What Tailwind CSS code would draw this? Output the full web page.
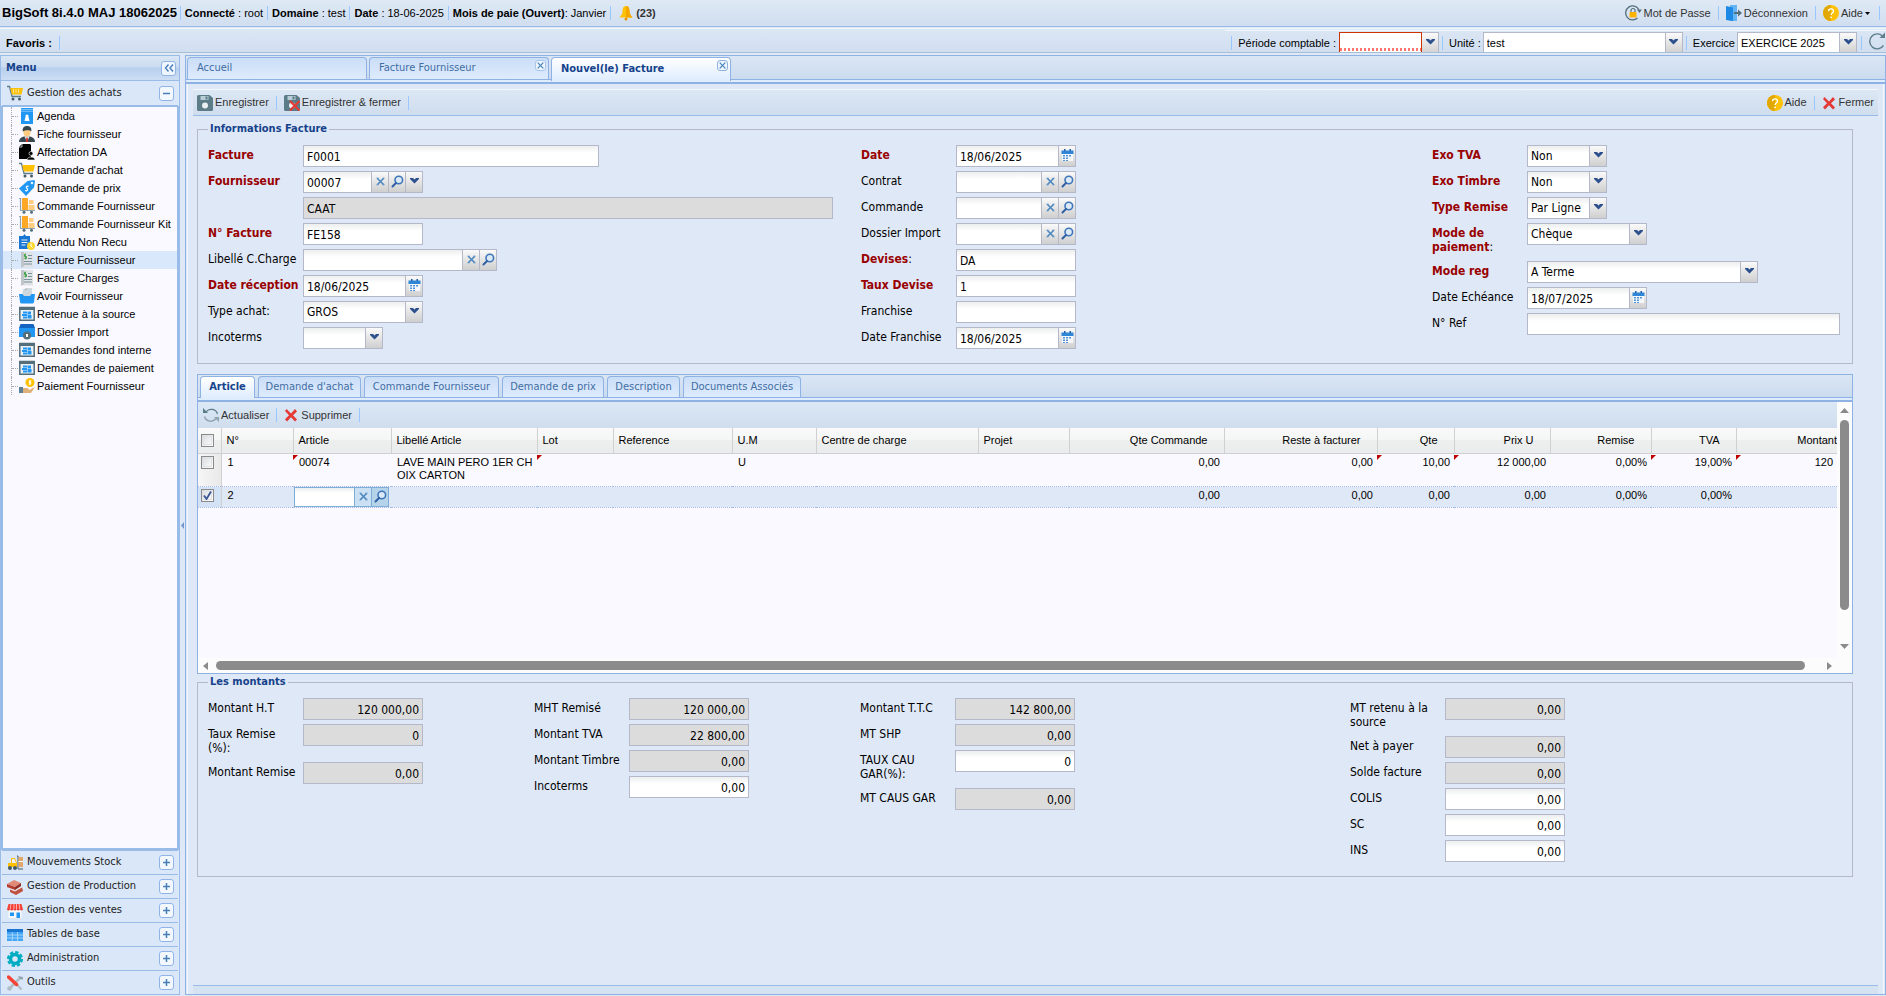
<!DOCTYPE html>
<html lang="fr">
<head>
<meta charset="utf-8">
<title>BigSoft - Nouvel(le) Facture</title>
<script src="https://cdn.jsdelivr.net/npm/@tailwindcss/browser@4"></script>
</head>
<body class="h-screen flex flex-col overflow-hidden bg-[#dfe8f6] font-['Liberation_Sans',sans-serif] text-[11px] text-black">

<!-- icon sprite -->
<svg class="hidden">
    <symbol id="i-lock" viewBox="0 0 18 16"><path d="M12.500 13A7 7 0 1 1 13.800 4.500" fill="none" stroke="#546e7a" stroke-width="1.300" /><path d="M11.800 4.500h5l-2.300 3.500z" fill="#546e7a" /><path d="M6 8V5.500a2 2 0 0 1 4 0V8" fill="none" stroke="#546e7a" stroke-width="1.200" /><rect x="4.500" y="7" width="7" height="5.500" rx="1" fill="#ffb300" /></symbol>
    <symbol id="i-exit" viewBox="0 0 16 16"><path d="M4 0h7v16H4z" fill="#64b5f6" /><path d="M0 1l7 1.500V16l-7-1z" fill="#1e88e5" /><path d="M8 7h4V4.500L16 8l-4 3.500V9H8z" fill="#546e7a" /></symbol>
    <symbol id="i-help" viewBox="0 0 16 16"><circle cx="8" cy="8" r="8" fill="#ffc107" /><path d="M8 0a8 8 0 0 0 0 16z" fill="#e0a800" /><path d="M5.500 6.200C5.500 3 10.500 3 10.500 6.200 10.500 8 8 8 8 10" fill="none" stroke="#fff" stroke-width="1.300" /><circle cx="8" cy="12.300" r=".9" fill="#fff" /></symbol>
    <symbol id="i-bell" viewBox="0 0 14 16"><path d="M7 1C4 1 3.500 4 3.500 6.500S2 10.500.500 12.500h13C12 10.500 10.500 9 10.500 6.500S10 1 7 1z" fill="#ffc107" /><path d="M7 1c3 0 3.500 3 3.500 5.500s1.500 4 3 6H7z" fill="#f5a700" /><circle cx="7" cy="14" r="1.500" fill="#e69500" /></symbol>
    <symbol id="i-refresh" viewBox="0 0 18 18"><path d="M15.500 13.500A7.500 7.500 0 1 1 14.500 4" fill="none" stroke="#5f7f8c" stroke-width="1.400" /><path d="M11.500 6H17V.5z" fill="#5f7f8c" /></symbol>
    <symbol id="i-sync" viewBox="0 0 16 16"><path d="M3 5a6.500 6.500 0 0 1 11.500 2" fill="none" stroke="#5b7d85" stroke-width="1.200" /><path d="M0 1l5 5H0z" fill="#5b7d85" /><path d="M13 11.500a6.500 6.500 0 0 1-11.500-2" fill="none" stroke="#90a4ae" stroke-width="1.400" /><path d="M16 15l-5-5h5z" fill="#90a4ae" /></symbol>
    <symbol id="i-save" viewBox="0 0 16 16"><path d="M1.500 0h11L16 3v11.500a1.500 1.500 0 0 1-1.500 1.500h-13A1.500 1.500 0 0 1 0 14.500v-13A1.500 1.500 0 0 1 1.500 0z" fill="#5c7c88" /><path d="M3.500 1h8v4h-8z" fill="#b8cdd6" /><path d="M8.500 1.500h2v3h-2z" fill="#5c7c88" /><circle cx="8" cy="10.500" r="3" fill="#eceff1" /></symbol>
    <symbol id="i-saveclose" viewBox="0 0 16 16"><use href="#i-save" /><path d="M6 6l9.500 9.500M15.500 6L6 15.500" stroke="#e53935" stroke-width="2.200" /></symbol>
    <symbol id="i-x" viewBox="0 0 14 14"><path d="M2.500 1L7 5.500 11 1l2 2.500L9 7.200l4 4.300-2 2-4-4.200L3 13.500 1 11.300 5 7.200 1 3z" fill="#e53935" /></symbol>
    <symbol id="i-chev" viewBox="0 0 9 6"><path d="M0 0h3l1.500 1.500L6 0h3v1L4.500 5.500 0 1z" fill="#2c4f8e" /></symbol>
    <symbol id="i-clear" viewBox="0 0 9 9"><path d="M1.500 1.500l6 6M7.500 1.500l-6 6" stroke="#4a86bf" stroke-width="1.600" /><path d="M.5 1.200h2M6.500 1.200h2M.5 7.800h2M6.500 7.800h2" stroke="#4a86bf" /></symbol>
    <symbol id="i-find" viewBox="0 0 13 13"><circle cx="7.800" cy="5" r="3.800" fill="#dceaf8" stroke="#3f76b9" stroke-width="1.600" /><path d="M5 8L1.500 11.500" stroke="#2f5fa5" stroke-width="2" stroke-linecap="round" /></symbol>
    <symbol id="i-cal" viewBox="0 0 13 13"><path d="M1 4h11v8H1z" fill="#f4f8fc" /><path d="M.5 1.500h12V5H.5z" fill="#2f86d6" /><path d="M3 0h1.500v2H3zM8.500 0H10v2H8.500z" fill="#1d5fa8" /><path d="M2 6h2v1.500H2zM5 6h2v1.500H5zM8 6h2v1.500H8zM2 8.500h2V10H2zM5 8.500h2V10H5zM2 11h2v1H2zM5 11h2v1H5z" fill="#4f93d8" /></symbol>
    <symbol id="i-cart" viewBox="0 0 16 16"><path d="M0 1.500h2.500l2.500 10h9" fill="none" stroke="#607d8b" stroke-width="1.300" /><path d="M3.200 3H16l-1.500 6.500H4.800z" fill="#ffc107" /><circle cx="6" cy="14" r="1.500" fill="#455a64" /><circle cx="12.500" cy="14" r="1.500" fill="#455a64" /></symbol>
    <symbol id="i-cartbig" viewBox="0 0 16 16"><use href="#i-cart" /><path d="M6.500 4v4M9 4v4M11.500 4v4" stroke="#fff3c4" stroke-width=".7" /></symbol>
    <symbol id="i-agenda" viewBox="0 0 16 16"><path d="M2 0h12v16H2z" fill="#2196f3" /><path d="M2 1.500h12M2 3.300h12" stroke="#90caf9" stroke-width=".8" /><circle cx="8" cy="8" r="1.600" fill="#fff" /><path d="M6.500 9h3l1 4h-5z" fill="#fff" /></symbol>
    <symbol id="i-man" viewBox="0 0 16 16"><path d="M0 16c0-4 3-5 5-5.500h6c2 .5 5 1.500 5 5.500z" fill="#37474f" /><path d="M5.500 10.500L8 16l2.500-5.500z" fill="#eceff1" /><path d="M7.300 11.500h1.400l.5 4.500H6.800z" fill="#d32f2f" /><ellipse cx="8" cy="6" rx="3.600" ry="4.500" fill="#ffcc80" /><path d="M3.800 5.500C3 1 6 0 8 0s5.200 1 4.200 5.500C11 3.500 6 4 3.800 5.500z" fill="#37474f" /></symbol>
    <symbol id="i-doc" viewBox="0 0 16 16"><path d="M3 0h8l1 1v14H0V3z" fill="#000" /><path d="M0 3h3V0" fill="none" stroke="#fff" stroke-width=".7" /><circle cx="12" cy="9.500" r="2" stroke="#fff" stroke-width=".6" /><path d="M8 16c0-4 8-4 8 0z" stroke="#fff" stroke-width=".6" /></symbol>
    <symbol id="i-tag" viewBox="0 0 16 16"><path d="M0 8.500L8.500 1 15 0l1 1-1 6.500L7 16z" fill="#2196f3" /><circle cx="13" cy="3" r="1.300" fill="#e3f2fd" /><path d="M9.500 6.500c-2-1-3 1-1.500 2s0 3-2 2" fill="none" stroke="#fff" stroke-width="1.200" /></symbol>
    <symbol id="i-boxes" viewBox="0 0 16 16"><path d="M0 .5h1.500v12H16" fill="none" stroke="#90a4ae" stroke-width="1.200" /><path d="M3 0h6v12H3z" fill="#ffa726" /><path d="M10 2h4.500v4H10zM9.500 7h6v5h-6z" fill="#ffcc80" /><circle cx="5" cy="14.300" r="1.500" fill="#546e7a" /><circle cx="12.500" cy="14.300" r="1.500" fill="#546e7a" /></symbol>
    <symbol id="i-clip" viewBox="0 0 16 16"><path d="M0 2h4l1.500-2L7 2h4v13H0z" fill="#1976d2" /><path d="M2.500 6h6M2.500 8.500h6M2.500 11h4" stroke="#e3f2fd" stroke-width="1.200" /><circle cx="12" cy="12" r="4" fill="#fdd835" /><path d="M12 9.500V12l1.500 1.500" fill="none" stroke="#fff" /></symbol>
    <symbol id="i-bill" viewBox="0 0 16 16"><path d="M2 0h12v16l-2-1-2 1-2-1-2 1-2-1-2 1z" fill="#e0e3e5" /><path d="M2 0h3v15l-1-.5L2 16z" fill="#bfc6ca" /><path d="M7 2.500H5.500v2h2v2H5.500M6.300 1.500v6" fill="none" stroke="#43a047" /><path d="M9 3.500h4M9 6.500h4M5 9.500h8M5 12h8" stroke="#78909c" /></symbol>
    <symbol id="i-basket" viewBox="0 0 16 16"><path d="M4 2l4-2h5v8H3z" fill="#cfd8dc" /><path d="M4 2h4V0z" fill="#b0bec5" /><path d="M0 6h3.500l1.500 2h6l1.500-2H16l-1 8q0 1.500-2 1.500H3q-2 0-2-1.500z" fill="#2196f3" /></symbol>
    <symbol id="i-window" viewBox="0 0 16 16"><path d="M.8 1.500h14.400v12.800H.8z" fill="#e8f0f5" stroke="#546e7a" stroke-width="1.500" /><path d="M0 1h16v3H0z" fill="#546e7a" /><path d="M4 5.500h4v2H4zM8.500 5.500H12v3H8.500zM3 8h5v2H3zM8.500 9h4v3.500h-4zM4 10.500h4v2H4z" fill="#2196f3" /></symbol>
    <symbol id="i-folder" viewBox="0 0 16 16"><path d="M1.500 0h13L16 4v9H0V4z" fill="#1565c0" /><path d="M0 4h16v8.500q0 .5-1 .5H1q-1 0-1-.5z" fill="#2196f3" /><circle cx="8" cy="11.500" r="4" fill="#546e7a" /><path d="M7 10h2v3H7z" fill="#fff" /></symbol>
    <symbol id="i-pay" viewBox="0 0 16 16"><circle cx="11" cy="4.500" r="4.500" fill="#ffc107" /><path d="M12.300 3h-2v1.500h1.500V6h-2M11 2v5" fill="none" stroke="#fff" stroke-width=".9" /><path d="M4 10h5l1 2 6-3-4 6H3z" fill="#e0b07a" /><path d="M0 9h4v6H0z" fill="#5b7f95" /></symbol>
    <symbol id="i-lift" viewBox="0 0 16 16"><path d="M10 1h1v13h5" fill="none" stroke="#455a64" /><path d="M11.500 2H16v10h-4.500z" fill="#e2a76a" /><path d="M11.500 6.500H16" stroke="#fff" /><path d="M1 8h3V3h4l2 5v4H1z" fill="#ffc107" /><path d="M5 4h2.500L9 8H5z" fill="#eceff1" /><circle cx="3" cy="13" r="2" fill="#455a64" /><circle cx="8" cy="13" r="2" fill="#455a64" /></symbol>
    <symbol id="i-bricks" viewBox="0 0 16 16"><path d="M0 5l7-4 7 3-6 4z" fill="#e08a78" /><path d="M0 5l8 3v3L0 8z" fill="#b53c2f" /><path d="M8 8l6-4v3l-6 4z" fill="#8f2c22" /><path d="M3 10l5 2 7-4 1 4-7 4-6-3z" fill="#c0503f" /><path d="M3 10l5 2 7-4" fill="none" stroke="#f0e0dc" /></symbol>
    <symbol id="i-shop" viewBox="0 0 16 16"><path d="M1.500 7h13v8h-13z" fill="#f5f8fa" /><path d="M1.500 1h13L16 6.500H0z" fill="#f44336" /><path d="M4 1L3 7M7 1v6M9.500 1v6M12 1l1 6" stroke="#ffcdd2" stroke-width=".8" /><path d="M0 6h16q-1.500 3-3.200 0-1.600 3-3.200 0-1.600 3-3.200 0-1.600 3-3.200 0Q1.500 9 0 6z" fill="#e53935" /><path d="M3 9.500h4V13H3zM9.500 9.500H13V15H9.500z" fill="#2196f3" /></symbol>
    <symbol id="i-table" viewBox="0 0 16 16"><path d="M0 2h16v12H0z" fill="#42a5f5" /><path d="M0 2h16v3H0z" fill="#1976d2" /><path d="M0 8h16M0 11h16M5.300 5v9M10.600 5v9" stroke="#bbdefb" stroke-width=".8" /></symbol>
    <symbol id="i-gear" viewBox="0 0 16 16"><circle cx="8" cy="8" r="4.500" fill="none" stroke="#00acc1" stroke-width="3.500" /><circle cx="8" cy="8" r="7" fill="none" stroke="#00acc1" stroke-width="2" stroke-dasharray="3.400 2.100" /></symbol>
    <symbol id="i-tools" viewBox="0 0 16 16"><path d="M13.500 2.500L3 13" stroke="#b0bec5" stroke-width="2.500" /><path d="M11 1l1.500 2.500L15.500 5 16 2z" fill="#90a4ae" /><circle cx="2.500" cy="13.500" r="2.300" fill="#b0bec5" /><path d="M9 8.500l5.500 6" stroke="#b0bec5" stroke-width="2" /><path d="M1.500 2l8 7.500" stroke="#f44336" stroke-width="3.500" stroke-linecap="round" /></symbol>
    <symbol id="i-collapse" viewBox="0 0 10 8"><path d="M4.500.5L1.500 4l3 3.500M9 .5L6 4l3 3.500" fill="none" stroke="#4a7ebb" stroke-width="1.400" /></symbol>
    <symbol id="i-minus" viewBox="0 0 7 7"><path d="M0 3.500h7" stroke="#4a7ebb" stroke-width="1.500" /></symbol>
    <symbol id="i-plus" viewBox="0 0 7 7"><path d="M0 3.500h7M3.500 0v7" stroke="#4a7ebb" stroke-width="1.500" /></symbol>
</svg>

<!-- top bar -->
<header class="flex items-center h-[27px] shrink-0 pl-[2px] pr-[6px] border-b border-[#99bbe8] bg-linear-to-b from-[#dfe9f5] to-[#d0def0]">
    <b class="text-[13px] mr-[3px]">BigSoft 8i.4.0 MAJ 18062025</b>
    <span class="w-px h-[14px] mr-1 bg-[#98c8ff]"></span>
    <span class="mr-1"><b>Connecté</b> : root</span>
    <span class="w-px h-[14px] mr-1 bg-[#98c8ff]"></span>
    <span class="mr-1"><b>Domaine</b> : test</span>
    <span class="w-px h-[14px] mr-1 bg-[#98c8ff]"></span>
    <span class="mr-1"><b>Date</b> : 18-06-2025</span>
    <span class="w-px h-[14px] mr-1 bg-[#98c8ff]"></span>
    <span class="mr-1"><b>Mois de paie (Ouvert)</b>: Janvier</span>
    <span class="w-px h-[14px] mr-2 bg-[#98c8ff]"></span>
    <button class="flex items-center gap-[3px] font-bold text-[#333]"><svg class="w-[14px] h-4"><use href="#i-bell" /></svg>(23)</button>
    <div class="ml-auto flex items-center gap-[7px] text-[#333]">
        <button class="flex items-center"><svg class="w-[18px] h-4"><use href="#i-lock" /></svg>Mot de Passe</button>
        <span class="w-px h-[14px] bg-[#98c8ff]"></span>
        <button class="flex items-center gap-[2px]"><svg class="w-4 h-4"><use href="#i-exit" /></svg>Déconnexion</button>
        <span class="w-px h-[14px] bg-[#98c8ff]"></span>
        <button class="flex items-center gap-[2px]"><svg class="w-4 h-4"><use href="#i-help" /></svg>Aide<svg class="w-[5px] h-[3px]" viewBox="0 0 5 3"><path d="M0 0h5L2.500 3z" fill="#000" /></svg></button>
        <span class="w-px h-[14px] ml-[2px] bg-[#98c8ff]"></span>
    </div>
</header>

<!-- favourites / period -->
<div class="flex h-[25px] shrink-0 mt-px pl-[6px] border-t border-b border-t-[#f2f7fc] border-b-[#a9bfd3] bg-linear-to-b from-[#dce7f4] to-[#d0def0] overflow-hidden">
    <b class="mt-[6px]">Favoris :</b>
    <span class="w-px h-[14px] mt-[7px] ml-[7px] bg-[#98c8ff]"></span>
    <div class="ml-auto flex h-[24px] pl-[6px] border-t border-[#f2f7fc] mt-px">
        <span class="w-px h-[14px] mt-[5px] bg-[#98c8ff]"></span>
        <label for="periode" class="mt-1 ml-[6px]">Période comptable :</label>
        <div class="relative ml-[3px] w-[100px] h-[22px] mt-px">
            <input id="periode" class="w-[83px] h-full px-[3px] bg-white border border-[#cc3300] outline-none">
            <div class="absolute left-px top-[16px] w-[81px] h-[3px] bg-[repeating-linear-gradient(90deg,#ff7870_0_2px,#fff_2px_4px)]"></div>
            <button aria-label="Ouvrir" class="absolute right-0 top-0 flex items-center justify-center w-[17px] h-full pb-1 bg-linear-to-b from-[#fafafa] to-[#d0d0d0] border-t border-r border-[#b5b8c8]"><svg class="w-[9px] h-[6px]"><use href="#i-chev" /></svg></button>
        </div>
        <span class="w-px h-[14px] mt-[5px] ml-[3px] bg-[#98c8ff]"></span>
        <label for="unite" class="mt-1 ml-[6px]">Unité :</label>
        <div class="relative ml-[2px] w-[200px] h-[22px] mt-px">
            <select id="unite" class="appearance-none w-full h-full px-[3px] bg-white border border-[#b5b8c8] outline-none"><option>test</option></select>
            <span class="pointer-events-none absolute right-px top-px flex items-center justify-center w-[17px] h-5 pb-[2px] bg-linear-to-b from-[#fafafa] to-[#d0d0d0] border-l border-[#b5b8c8]"><svg class="w-[9px] h-[6px]"><use href="#i-chev" /></svg></span>
        </div>
        <span class="w-px h-[14px] mt-[5px] ml-[3px] bg-[#98c8ff]"></span>
        <label for="exercice" class="mt-1 ml-[6px]">Exercice</label>
        <div class="relative ml-[2px] w-[120px] h-[22px] mt-px">
            <select id="exercice" class="appearance-none w-full h-full px-[3px] bg-white border border-[#b5b8c8] outline-none"><option>EXERCICE 2025</option></select>
            <span class="pointer-events-none absolute right-px top-px flex items-center justify-center w-[17px] h-5 pb-[2px] bg-linear-to-b from-[#fafafa] to-[#d0d0d0] border-l border-[#b5b8c8]"><svg class="w-[9px] h-[6px]"><use href="#i-chev" /></svg></span>
        </div>
        <span class="w-px h-[14px] mt-[5px] ml-[4px] bg-[#98c8ff]"></span>
        <button aria-label="Rafraîchir" class="ml-[6px] mt-px self-start"><svg class="w-[18px] h-[18px]"><use href="#i-refresh" /></svg></button>
    </div>
</div>

<div class="flex flex-1 min-h-0 pt-[2px] bg-[#dfe8f6]">
    <!-- menu -->
    <aside class="flex flex-col w-[180px] shrink-0 mb-px border border-[#99bbe8] font-['DejaVu_Sans_Condensed','Noto_Sans',sans-serif]">
        <div class="flex items-center h-[25px] shrink-0 pl-[5px] pr-[3px] border-b border-[#99bbe8] bg-[linear-gradient(#dae6f4,#cbdbef_45%,#b7cfee_50%,#cddef3)]">
            <b class="text-[#15428b]">Menu</b>
            <button aria-label="Réduire" class="ml-auto flex items-center justify-center w-[15px] h-[15px] rounded-[3px] border border-[#8fb5e6] bg-[#eef5fd]"><svg class="w-[10px] h-2"><use href="#i-collapse" /></svg></button>
        </div>
        <div class="flex items-center h-[25px] shrink-0 pl-[5px] pr-[4px] mx-px border-b border-[#99bbe8] bg-[#d9e7f8] text-[#222]">
            <svg class="w-4 h-4 mr-1"><use href="#i-cartbig" /></svg>Gestion des achats
            <button aria-label="Replier" class="ml-auto flex items-center justify-center w-[15px] h-[15px] rounded-[3px] border border-[#8fb5e6] bg-[#f3f8fe]"><svg class="w-[7px] h-[7px]"><use href="#i-minus" /></svg></button>
        </div>
        <ul id="tree" class="flex-1 min-h-0 border-2 border-t border-[#99bbe8] bg-[#f9f9ff] font-['Liberation_Sans',sans-serif]"></ul>
        <div id="accordion" class="px-px"></div>
    </aside>
    <div class="flex items-center w-[5px] shrink-0"><svg class="w-[5px] h-[7px]" viewBox="0 0 5 7"><path d="M4 0v7L1 3.500z" fill="#6f97cc" /></svg></div>

    <main class="flex flex-col flex-1 min-w-0 mb-px border border-[#8db2e3]">
        <div role="tablist" class="flex gap-[2px] h-[24px] shrink-0 pl-px pt-px border-b border-[#8db2e3] bg-linear-to-b from-[#dbe6f4] to-[#cbdbef] font-['DejaVu_Sans_Condensed','Noto_Sans',sans-serif]">
            <button role="tab" class="w-[180px] px-[9px] pb-px text-left rounded-t-[4px] border border-b-0 border-[#8db2e3] bg-linear-to-b from-[#cadef7] to-[#deebfd] text-[#416da3]">Accueil</button>
            <button role="tab" class="relative w-[180px] px-[9px] pb-px text-left rounded-t-[4px] border border-b-0 border-[#8db2e3] bg-linear-to-b from-[#cadef7] to-[#deebfd] text-[#416da3]">Facture Fournisseur
                <span class="absolute right-[2px] top-[2px] flex items-center justify-center w-[11px] h-[11px] rounded-[3px] border border-[#a9c5ea] bg-[#eef5fd]"><svg class="w-[7px] h-[7px]"><use href="#i-clear" /></svg></span></button>
            <button role="tab" aria-selected="true" class="relative w-[180px] h-[24px] px-[9px] pb-px text-left font-bold rounded-t-[4px] border border-b-0 border-[#8db2e3] bg-linear-to-b from-white to-[#deecfd] text-[#15428b]">Nouvel(le) Facture
                <span class="absolute right-[2px] top-[2px] flex items-center justify-center w-[11px] h-[11px] rounded-[3px] border border-[#8db2e3] bg-[#eef5fd]"><svg class="w-[7px] h-[7px]"><use href="#i-clear" /></svg></span></button>
        </div>
        <div class="h-1 shrink-0 bg-[#deecfd] border-b-2 border-[#8db2e3]"></div>

        <div class="flex flex-col flex-1 min-h-0 px-[5px] pt-[5px] mx-px border-x border-[#f2f7fc]">
            <div class="flex items-center gap-[7px] h-[27px] shrink-0 px-[4px] border-t border-b border-t-[#f2f7fc] border-b-[#99bbe8] bg-linear-to-b from-[#dce7f4] to-[#cfddee] text-[#333]">
                <button class="flex items-center gap-[2px]"><svg class="w-4 h-4"><use href="#i-save" /></svg>Enregistrer</button>
                <span class="w-px h-[14px] bg-[#98c8ff]"></span>
                <button class="flex items-center gap-[2px]"><svg class="w-4 h-4"><use href="#i-saveclose" /></svg>Enregistrer &amp; fermer</button>
                <span class="w-px h-[14px] bg-[#98c8ff]"></span>
                <button class="ml-auto flex items-center gap-[2px]"><svg class="w-4 h-4"><use href="#i-help" /></svg>Aide</button>
                <span class="w-px h-[14px] bg-[#98c8ff]"></span>
                <button class="flex items-center gap-[3px]"><svg class="w-[14px] h-[14px]"><use href="#i-x" /></svg>Fermer</button>
            </div>

            <div class="flex flex-col flex-1 pl-[4px] pr-[25px] pt-[5px] font-['DejaVu_Sans_Condensed','Noto_Sans',sans-serif]">
                <fieldset class="h-[243px] border border-[#b5b8c8] px-[10px]">
                    <legend class="px-[2px] leading-4 font-bold text-[#15428b]">Informations Facture</legend>
                    <div class="grid grid-cols-[653fr_571fr_410fr] pt-[8px] text-xs">
                        <div id="info1"></div>
                        <div id="info2"></div>
                        <div id="info3"></div>
                    </div>
                </fieldset>

                <!-- lines -->
                <section class="flex flex-col h-[300px] mt-[10px] border border-[#8db2e3]">
                    <div role="tablist" id="subtabs" class="flex gap-[3px] h-[23px] shrink-0 pl-[2px] pt-px border-b border-[#8db2e3] bg-linear-to-b from-[#dbe6f4] to-[#cbdbef]"></div>
                    <div class="h-1 shrink-0 bg-[#deecfd] border-b-2 border-[#8db2e3]"></div>
                    <div class="flex flex-1 min-h-0">
                        <div class="flex flex-col flex-1 min-w-0 font-['Liberation_Sans',sans-serif]">
                            <div class="flex items-center gap-[7px] h-[26px] shrink-0 px-[5px] bg-linear-to-b from-[#dce8f5] to-[#cfddee] text-[#333]">
                                <button class="flex items-center gap-[2px]"><svg class="w-4 h-4"><use href="#i-sync" /></svg>Actualiser</button>
                                <span class="w-px h-[14px] bg-[#98c8ff]"></span>
                                <button class="flex items-center gap-[3px]"><svg class="w-[14px] h-[14px]"><use href="#i-x" /></svg>Supprimer</button>
                                <span class="w-px h-[14px] bg-[#98c8ff]"></span>
                            </div>
                            <div class="flex-1 min-h-0 overflow-hidden bg-[#f9f9ff]">
                                <table class="table-fixed w-full border-collapse">
                                    <colgroup>
                                        <col class="w-[23px]"><col class="w-[72px]"><col class="w-[98px]"><col class="w-[146px]"><col class="w-[76px]"><col class="w-[119px]"><col class="w-[84px]"><col class="w-[162px]"><col class="w-[91px]"><col class="w-[155px]"><col class="w-[153px]"><col class="w-[77px]"><col class="w-[96px]"><col class="w-[101px]"><col class="w-[85px]"><col>
                                    </colgroup>
                                    <thead><tr id="ghead" class="h-[25px] bg-[linear-gradient(#f9f9f9,#f5f6f6_45%,#edeeee_50%,#ebeced)]"></tr></thead>
                                    <tbody id="gbody"></tbody>
                                </table>
                            </div>
                            <div class="flex items-center h-[15px] shrink-0 px-[5px] bg-[#fcfcfc]">
                                <svg class="w-[5px] h-2" viewBox="0 0 5 8"><path d="M5 0v8L0 4z" fill="#8b8b8b" /></svg>
                                <div class="flex-1 h-[9px] ml-2 mr-[22px] rounded-full bg-[#8b8b8b]"></div>
                                <svg class="w-[5px] h-2" viewBox="0 0 5 8"><path d="M0 0v8l5-4z" fill="#8b8b8b" /></svg>
                            </div>
                        </div>
                        <div class="flex flex-col items-center w-[15px] shrink-0 pt-[6px] pb-[24px] bg-[#fcfcfc]">
                            <svg class="w-[9px] h-[5px] shrink-0" viewBox="0 0 9 5"><path d="M0 5h9L4.500 0z" fill="#8b8b8b" /></svg>
                            <div class="w-[9px] h-[190px] mt-[7px] rounded-full bg-[#8b8b8b]"></div>
                            <svg class="w-[9px] h-[5px] mt-auto shrink-0" viewBox="0 0 9 5"><path d="M0 0h9L4.500 5z" fill="#8b8b8b" /></svg>
                        </div>
                    </div>
                </section>

                <fieldset class="h-[203px] border border-[#b5b8c8] px-[10px]">
                    <legend class="px-[2px] leading-4 font-bold text-[#15428b]">Les montants</legend>
                    <div class="grid grid-cols-[326fr_326fr_490fr_492fr] pt-[8px] text-xs">
                        <div id="mt1"></div>
                        <div id="mt2"></div>
                        <div id="mt3"></div>
                        <div id="mt4"></div>
                    </div>
                </fieldset>
                <div class="h-[9px] shrink-0 mt-auto ml-[-4px] mr-[-25px] border-t border-[#99bbe8] bg-[#d5e2f2]"></div>
            </div>
        </div>
    </main>
</div>

<script>
    const $ = id => document.getElementById(id);
    const icon = (name, cls) => `<svg class="${cls}"><use href="#i-${name}" /></svg>`;

    // left menu
    const tree = [
        ["agenda", "Agenda"], ["man", "Fiche fournisseur"], ["doc", "Affectation DA"], ["cart", "Demande d'achat"],
        ["tag", "Demande de prix"], ["boxes", "Commande Fournisseur"], ["boxes", "Commande Fournisseur Kit"],
        ["clip", "Attendu Non Recu"], ["bill", "Facture Fournisseur"], ["bill", "Facture Charges"],
        ["basket", "Avoir Fournisseur"], ["window", "Retenue à la source"], ["folder", "Dossier Import"],
        ["window", "Demandes fond interne"], ["window", "Demandes de paiement"], ["pay", "Paiement Fournisseur"],
    ];
    $("tree").innerHTML = tree.map(([i, t]) => `
        <li class="flex items-center h-[18px] pl-2 whitespace-nowrap ${t === "Facture Fournisseur" ? "bg-[#d9e8fb]" : ""}">
            <span class="w-[7px] h-full shrink-0 border-l border-dotted border-[#aaa] flex items-center"><span class="w-full border-t border-dotted border-[#aaa]"></span></span>
            ${icon(i, "w-4 h-4 shrink-0 ml-px")}<a href="#" class="ml-[2px]">${t}</a>
        </li>`).join("");

    const groups = [["lift", "Mouvements Stock"], ["bricks", "Gestion de Production"], ["shop", "Gestion des ventes"],
        ["table", "Tables de base"], ["gear", "Administration"], ["tools", "Outils"]];
    $("accordion").innerHTML = groups.map(([i, t]) => `
        <div class="flex items-center h-6 pl-[5px] pr-[4px] border-t border-[#99bbe8] bg-[#d9e7f8] text-[#222]">
            ${icon(i, "w-4 h-4 mr-1")}${t}
            <button aria-label="${t}" class="ml-auto flex items-center justify-center w-[15px] h-[15px] rounded-[3px] border border-[#8fb5e6] bg-[#f3f8fe]">${icon("plus", "w-[7px] h-[7px]")}</button>
        </div>`).join("");

    // form fields
    let n = 0;
    const trigIcons = {
        clear: icon("clear", "w-[9px] h-[9px]"),
        find: icon("find", "w-[13px] h-[13px]"),
        cal: icon("cal", "w-[13px] h-[13px]"),
        chev: icon("chev", "w-[9px] h-[6px]"),
    };
    const trigger = k => `<button aria-label="${k}" class="flex items-center justify-center w-[17px] shrink-0 pb-[2px] border-l border-[#b5b8c8] bg-linear-to-b from-[#fafafa] to-[#cfcfcf]">${trigIcons[k]}</button>`;
    function field(f) {
        const id = "f" + (++n);
        const bg = f.off ? "bg-[#dcdcdc]" : "bg-[linear-gradient(#eceeef,#fff_7px)]";
        const w = f.w || "w-[120px]";
        const star = f.req ? "font-bold text-[#990000]" : "";
        const label = `<label for="${id}" class="w-[92px] mr-[3px] shrink-0 py-[3px] leading-[14px]"><span class="${star}">${f.l || ""}</span>${f.colon || ""}</label>`;
        const control = f.sel
            ? `<select id="${id}" class="appearance-none flex-1 min-w-0 px-[3px] outline-none"><option>${f.v || ""}</option></select><span class="pointer-events-none absolute right-0 inset-y-0 flex items-center justify-center w-[17px] pb-[2px] border-l border-[#b5b8c8] bg-linear-to-b from-[#fafafa] to-[#cfcfcf]">${trigIcons.chev}</span>`
            : `<input id="${id}" value="${f.v || ""}" ${f.off ? "readonly" : ""} class="flex-1 min-w-0 px-[3px] pt-px outline-none ${f.num ? "text-right" : ""}">${(f.t || []).map(trigger).join("")}`;
        return `<div class="flex items-start mb-1">${label}<div class="relative flex h-[22px] ${w} border border-[#b5b8c8] ${bg}">${control}</div></div>`;
    }
    const fill = (id, list) => $(id).innerHTML = list.map(field).join("");

    fill("info1", [
        { l: "Facture", req: 1, v: "F0001", w: "w-[296px]" },
        { l: "Fournisseur", req: 1, v: "00007", t: ["clear", "find", "chev"] },
        { v: "CAAT", off: 1, w: "w-[530px]" },
        { l: "N° Facture", req: 1, v: "FE158" },
        { l: "Libellé C.Charge", w: "w-[194px]", t: ["clear", "find"] },
        { l: "Date réception", req: 1, v: "18/06/2025", t: ["cal"] },
        { l: "Type achat:", v: "GROS", sel: 1 },
        { l: "Incoterms", sel: 1, w: "w-[80px]" },
    ]);
    fill("info2", [
        { l: "Date", req: 1, v: "18/06/2025", t: ["cal"] },
        { l: "Contrat", t: ["clear", "find"] },
        { l: "Commande", t: ["clear", "find"] },
        { l: "Dossier Import", t: ["clear", "find"] },
        { l: "Devises", colon: ":", req: 1, v: "DA" },
        { l: "Taux Devise", req: 1, v: "1" },
        { l: "Franchise" },
        { l: "Date Franchise", v: "18/06/2025", t: ["cal"] },
    ]);
    fill("info3", [
        { l: "Exo TVA", req: 1, v: "Non", sel: 1, w: "w-[80px]" },
        { l: "Exo Timbre", req: 1, v: "Non", sel: 1, w: "w-[80px]" },
        { l: "Type Remise", req: 1, v: "Par Ligne", sel: 1, w: "w-[80px]" },
        { l: "Mode de paiement", colon: ":", req: 1, v: "Chèque", sel: 1 },
        { l: "Mode reg", req: 1, v: "A Terme", sel: 1, w: "w-[231px]" },
        { l: "Date Echéance", v: "18/07/2025", t: ["cal"] },
        { l: "N° Ref", w: "w-[313px]" },
    ]);
    fill("mt1", [
        { l: "Montant H.T", v: "120 000,00", off: 1, num: 1 },
        { l: "Taux Remise (%):", v: "0", off: 1, num: 1 },
        { l: "Montant Remise", v: "0,00", off: 1, num: 1 },
    ]);
    fill("mt2", [
        { l: "MHT Remisé", v: "120 000,00", off: 1, num: 1 },
        { l: "Montant TVA", v: "22 800,00", off: 1, num: 1 },
        { l: "Montant Timbre", v: "0,00", off: 1, num: 1 },
        { l: "Incoterms", v: "0,00", num: 1 },
    ]);
    fill("mt3", [
        { l: "Montant T.T.C", v: "142 800,00", off: 1, num: 1 },
        { l: "MT SHP", v: "0,00", off: 1, num: 1 },
        { l: "TAUX CAU GAR(%):", v: "0", num: 1 },
        { l: "MT CAUS GAR", v: "0,00", off: 1, num: 1 },
    ]);
    fill("mt4", [
        { l: "MT retenu à la source", v: "0,00", off: 1, num: 1 },
        { l: "Net à payer", v: "0,00", off: 1, num: 1 },
        { l: "Solde facture", v: "0,00", off: 1, num: 1 },
        { l: "COLIS", v: "0,00", num: 1 },
        { l: "SC", v: "0,00", num: 1 },
        { l: "INS", v: "0,00", num: 1 },
    ]);

    // sub tabs
    const tabs = [["Article", "w-[55px]"], ["Demande d'achat", "w-[103px]"], ["Commande Fournisseur", "w-[135px]"],
        ["Demande de prix", "w-[102px]"], ["Description", "w-[73px]"], ["Documents Associés", "w-[118px]"]];
    $("subtabs").innerHTML = tabs.map(([t, w], i) => `<button role="tab" class="${w} whitespace-nowrap rounded-t-[4px] border border-b-0 border-[#8db2e3] ${i ? "bg-linear-to-b from-[#cadef7] to-[#deebfd] text-[#416da3]" : "h-[23px] pb-px font-bold bg-linear-to-b from-white to-[#deecfd] text-[#15428b]"}">${t}</button>`).join("");

    // grid
    const check = on => `<input type="checkbox" aria-label="Sélection" ${on ? "checked" : ""} class="appearance-none block w-[13px] h-[13px] border border-[#8a8a8a] bg-[linear-gradient(135deg,#d8dade,#fff)] outline-1 outline-offset-[-3px] outline-[#dfe3e8]">${on ? `<svg class="pointer-events-none absolute left-[5px] top-1 w-[9px] h-[9px]" viewBox="0 0 9 9"><path d="M1 4.500L3.500 8 8 .5" fill="none" stroke="#3a5795" stroke-width="1.800" /></svg>` : ""}`;
    const heads = ["N°", "Article", "Libellé Article", "Lot", "Reference", "U.M", "Centre de charge", "Projet",
        "Qte Commande", "Reste à facturer", "Qte", "Prix U", "Remise", "TVA", "Montant"];
    $("ghead").innerHTML = `<th class="pl-[3px] border-r border-b border-[#d0d0d0]">${check(false)}</th>` + heads.map((h, i) =>
        `<th class="font-normal border-b border-[#d0d0d0] whitespace-nowrap ${i === 14 ? "text-right" : i > 7 ? "text-right pr-[16px] border-r" : "text-left pl-[5px] border-r"}">${h}</th>`).join("");
    const rows = [
        ["1", "00074", "LAVE MAIN PERO 1ER CHOIX CARTON", "", "", "U", "", "", "0,00", "0,00", "10,00", "12 000,00", "0,00%", "19,00%", "120"],
        ["2", "", "", "", "", "", "", "", "0,00", "0,00", "0,00", "0,00", "0,00%", "0,00%", ""],
    ];
    const dirty = [1, 3, 10, 11, 13, 14];
    const mark = `<svg class="absolute left-0 top-px w-[5px] h-[5px]" viewBox="0 0 5 5"><path d="M0 0h5L0 5z" fill="#c00000" /></svg>`;
    const editor = `<div class="flex h-5 w-[95px] border border-[#7eadd9] bg-[linear-gradient(#eceeef,#fff_5px)]">
        <input aria-label="Article" class="flex-1 min-w-0 px-1 outline-none">
        <button aria-label="clear" class="flex items-center justify-center w-[17px] border-l border-[#7eadd9] bg-[#cbe1f3]">${trigIcons.clear}</button>
        <button aria-label="find" class="flex items-center justify-center w-[17px] border-l border-[#7eadd9] bg-[#b5d4ea]">${trigIcons.find}</button></div>`;
    $("gbody").innerHTML = rows.map((r, y) => `
        <tr class="align-top leading-[13px] ${y ? "h-[21px] bg-[#dfe8f6] border-y border-dotted border-[#a3bae9]" : "h-[33px]"}">
            <td class="relative pl-[3px] pt-[2px] border-r border-[#d0d0d0] ${y ? "bg-[#d3e2f5]" : "bg-linear-to-r from-[#f6f6f6] to-[#e9e9ea]"}">${check(y)}</td>
            ${r.map((c, i) => `<td class="relative break-all ${y && i === 1 ? "pl-px" : "pt-[2px]"} ${i > 7 ? "text-right pr-[4px]" : y && i === 1 ? "" : "pl-[6px]"}">${!y && dirty.includes(i) ? mark : ""}${y && i === 1 ? editor : c}</td>`).join("")}
        </tr>`).join("");
</script>
</body>
</html>
